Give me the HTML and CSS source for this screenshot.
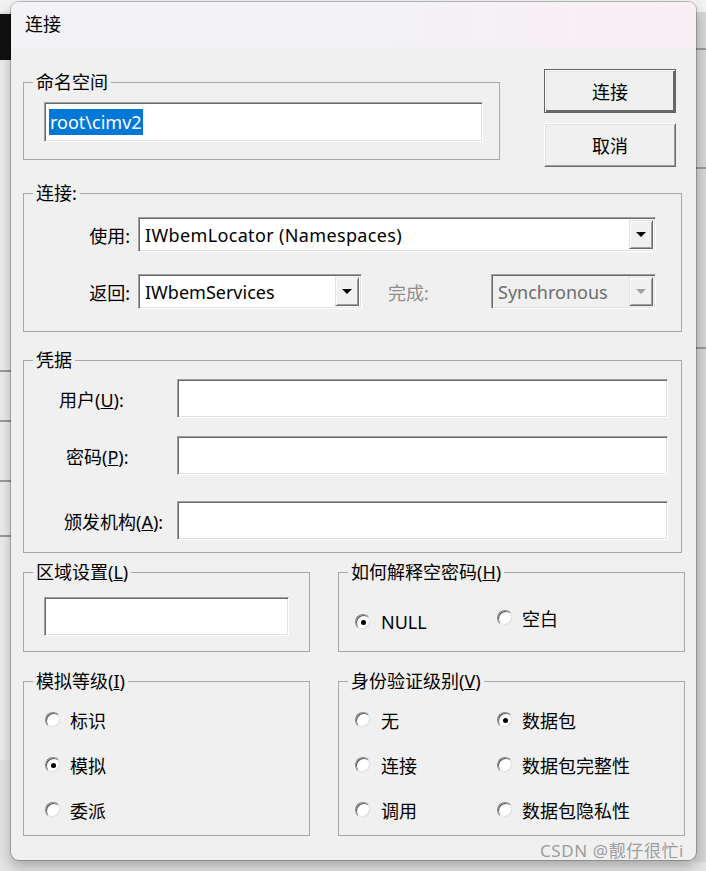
FILE: index.html
```html
<!DOCTYPE html>
<html lang="zh-CN">
<head>
<meta charset="utf-8">
<title>连接</title>
<link rel="stylesheet" href="styles.css">
</head>
<body>
<div class="desk">
  <div class="bg-top"></div>
  <div class="bg-dark"></div>
  <div class="bg-left"><span class="bg-line l1"></span><span class="bg-line l2"></span><span class="bg-line l3"></span><span class="bg-line l4"></span></div>
  <div class="bg-right"><span class="bg-line r1"></span><span class="bg-line r2"></span><span class="bg-line r3"></span></div>
</div>

<div class="dialog">
  <div class="titlebar">连接</div>
  <div class="body">

    <div class="row-top">
      <fieldset class="grp g-ns">
        <legend>命名空间</legend>
        <div class="edit e-ns"><span class="sel">root\cimv2</span></div>
      </fieldset>
      <div class="btns">
        <div class="btn default">连接</div>
        <div class="btn">取消</div>
      </div>
    </div>

    <fieldset class="grp g-conn">
      <legend>连接:</legend>
      <div class="crow r1">
        <span class="clbl">使用:</span>
        <div class="combo c-use"><span class="ctext">IWbemLocator (Namespaces)</span><span class="cbtn"><span class="tri"></span></span></div>
      </div>
      <div class="crow r2">
        <span class="clbl">返回:</span>
        <div class="combo c-ret"><span class="ctext">IWbemServices</span><span class="cbtn"><span class="tri"></span></span></div>
        <span class="dlbl">完成:</span>
        <div class="combo c-done disabled"><span class="ctext">Synchronous</span><span class="cbtn"><span class="tri"></span></span></div>
      </div>
    </fieldset>

    <fieldset class="grp g-cred">
      <legend>凭据</legend>
      <div class="frow f1"><span class="flbl p-u">用户(<u>U</u>):</span><div class="edit e-cred"></div></div>
      <div class="frow f2"><span class="flbl p-p">密码(<u>P</u>):</span><div class="edit e-cred"></div></div>
      <div class="frow f3"><span class="flbl p-a">颁发机构(<u>A</u>):</span><div class="edit e-cred"></div></div>
    </fieldset>

    <div class="row-pair r-mid">
      <fieldset class="grp g-small g-loc">
        <legend>区域设置(<u>L</u>)</legend>
        <div class="edit e-loc"></div>
      </fieldset>
      <fieldset class="grp g-wide g-null">
        <legend>如何解释空密码(<u>H</u>)</legend>
        <div class="nullrow">
          <label class="ritem ri-null"><span class="radio on"></span><span class="rtext">NULL</span></label>
          <label class="ritem ri-blank"><span class="radio"></span><span class="rtext">空白</span></label>
        </div>
      </fieldset>
    </div>

    <div class="row-pair r-bot">
      <fieldset class="grp g-small g-imp">
        <legend>模拟等级(<u>I</u>)</legend>
        <div class="rlist">
          <label class="ritem"><span class="radio"></span><span class="rtext">标识</span></label>
          <label class="ritem"><span class="radio on"></span><span class="rtext">模拟</span></label>
          <label class="ritem"><span class="radio"></span><span class="rtext">委派</span></label>
        </div>
      </fieldset>
      <fieldset class="grp g-wide g-auth">
        <legend>身份验证级别(<u>V</u>)</legend>
        <div class="rgrid">
          <label class="ritem"><span class="radio"></span><span class="rtext">无</span></label>
          <label class="ritem"><span class="radio on"></span><span class="rtext">数据包</span></label>
          <label class="ritem"><span class="radio"></span><span class="rtext">连接</span></label>
          <label class="ritem"><span class="radio"></span><span class="rtext">数据包完整性</span></label>
          <label class="ritem"><span class="radio"></span><span class="rtext">调用</span></label>
          <label class="ritem"><span class="radio"></span><span class="rtext">数据包隐私性</span></label>
        </div>
      </fieldset>
    </div>

  </div>
</div>

<div class="watermark">CSDN @靓仔很忙i</div>
</body>
</html>
```

FILE: styles.css
```css
* { box-sizing: border-box; }

html, body {
  margin: 0;
  padding: 0;
}

body {
  width: 706px;
  height: 871px;
  overflow: hidden;
  position: relative;
  background: #e4e4e4;
  font-family: "Noto Sans", "Noto Sans CJK SC", sans-serif;
  font-size: 18px;
  color: #000;
}

/* ---------- background desktop ---------- */
.desk {
  position: absolute;
  left: 0;
  top: 0;
  width: 706px;
  height: 871px;
}
.bg-top {
  position: absolute;
  left: 0; top: 0;
  width: 706px; height: 12px;
  background: #f2f2f2;
}
.bg-dark {
  position: absolute;
  left: 0; top: 14px;
  width: 12px; height: 46px;
  background: #111;
}
.bg-left {
  position: absolute;
  left: 0; top: 60px;
  width: 12px; height: 700px;
  background: #ececec;
}
.bg-right {
  position: absolute;
  left: 694px; top: 12px;
  width: 12px; height: 850px;
  background: #d6d6d6;
}
.bg-line {
  position: absolute;
  left: 0;
  width: 12px;
  height: 2px;
  background: #9a9a9a;
}
.l1 { top: 310px; }
.l2 { top: 360px; }
.l3 { top: 420px; }
.l4 { top: 475px; }
.r1 { top: 36px; }
.r2 { top: 155px; }
.r3 { top: 335px; }

/* ---------- dialog window ---------- */
.dialog {
  position: absolute;
  left: 11px;
  top: 2px;
  width: 685px;
  height: 858px;
  border-radius: 8px;
  overflow: hidden;
  background: #f0f0f0;
  box-shadow: 0 0 0 1px rgba(0, 0, 0, 0.22), 0 6px 14px rgba(0, 0, 0, 0.28);
}

.titlebar {
  height: 45px;
  padding-left: 14px;
  padding-bottom: 4px;
  display: flex;
  align-items: center;
  background: linear-gradient(90deg, #f2f2f7 0%, #f3f2f7 55%, #f9eef3 100%);
  font-size: 18px;
}

.body {
  padding: 22px 0 0 12px;
}

/* ---------- group boxes ---------- */
.grp {
  margin: 0;
  padding: 0;
  min-width: 0;
  border: 1px solid #a9a9a9;
  border-radius: 0;
}
.grp legend {
  margin-left: 9px;
  padding: 0 3px;
  font-size: 18px;
  line-height: 18px;
  height: 18px;
}

/* row 1 */
.row-top {
  display: flex;
  align-items: flex-start;
}
.g-ns {
  margin-top: 4px;
  width: 477px;
  height: 87px;
}
.btns {
  margin-left: 44px;
  display: flex;
  flex-direction: column;
  gap: 10px;
}
.btn {
  width: 132px;
  height: 44px;
  display: flex;
  align-items: center;
  justify-content: center;
  background: #f0f0f0;
  border: 1px solid;
  border-color: #fff #696969 #696969 #fff;
  box-shadow: inset 1px 1px 0 #e3e3e3, inset -1px -1px 0 #a0a0a0;
  font-size: 18px;
}
.btn.default {
  border: 1px solid #646464;
  box-shadow: inset 1px 1px 0 #fff, inset -2px -2px 0 #696969, inset 2px 2px 0 #e3e3e3;
}

/* edits */
.edit {
  background: #fff;
  border: 1px solid;
  border-color: #a0a0a0 #fff #fff #a0a0a0;
  box-shadow: inset 1px 1px 0 #696969, inset -1px -1px 0 #e3e3e3;
  display: flex;
  align-items: center;
}
.e-ns {
  margin: 11px 0 0 20px;
  width: 439px;
  height: 40px;
  padding-left: 4px;
}
.sel {
  background: #0078d7;
  color: #fff;
  line-height: 26px;
  padding: 0 1px;
}

/* connection group */
.g-conn {
  margin-top: 17px;
  width: 659px;
  height: 148px;
}
.crow {
  display: flex;
  align-items: center;
  height: 35px;
}
.crow.r1 { margin-top: 15px; }
.crow.r2 { margin-top: 22px; }
.clbl {
  width: 106px;
  text-align: right;
  margin-right: 8px;
}
.dlbl {
  margin-left: 26px;
  width: 103px;
  color: #8d8d8d;
}
.combo {
  height: 35px;
  display: flex;
  background: #fff;
  border: 1px solid;
  border-color: #a0a0a0 #fff #fff #a0a0a0;
  box-shadow: inset 1px 1px 0 #696969, inset -1px -1px 0 #e3e3e3;
  padding: 2px 2px 2px 2px;
}
.c-use { width: 518px; }
.c-use .ctext { letter-spacing: 0.35px; }
.c-ret { width: 224px; }
.c-done { width: 165px; }
.ctext {
  flex: 1;
  display: flex;
  align-items: center;
  padding-left: 4px;
  white-space: nowrap;
  overflow: hidden;
}
.cbtn {
  width: 24px;
  display: flex;
  align-items: center;
  justify-content: center;
  background: #f0f0f0;
  border: 1px solid;
  border-color: #e3e3e3 #696969 #696969 #e3e3e3;
  box-shadow: inset 1px 1px 0 #fff, inset -1px -1px 0 #a0a0a0;
}
.tri {
  width: 0;
  height: 0;
  border-left: 5px solid transparent;
  border-right: 5px solid transparent;
  border-top: 5px solid #000;
}
.combo.disabled { background: #f0f0f0; }
.combo.disabled .ctext { color: #6d6d6d; }
.combo.disabled .tri { border-top-color: #a0a0a0; }

/* credentials group */
.g-cred {
  margin-top: 19px;
  width: 659px;
  height: 202px;
}
.frow {
  display: flex;
  align-items: center;
  height: 39px;
}
.frow.f1 { margin-top: 10px; }
.frow.f2 { margin-top: 18px; }
.frow.f3 { margin-top: 26px; }
.flbl {
  width: 153px;
  white-space: nowrap;
}
.p-u { padding-left: 35px; }
.p-p { padding-left: 42px; }
.p-a { padding-left: 40px; }
.e-cred {
  width: 491px;
  height: 39px;
}

/* paired rows */
.row-pair {
  display: flex;
  align-items: flex-start;
}
.r-mid { margin-top: 10px; }
.r-bot { margin-top: 20px; }
.g-small { width: 287px; }
.g-wide { width: 347px; margin-left: 28px; }
.r-mid .grp { height: 89px; }
.r-bot .grp { height: 164px; }

.e-loc {
  margin: 16px 0 0 20px;
  width: 245px;
  height: 39px;
}

/* radios */
.ritem {
  display: flex;
  align-items: center;
  height: 30px;
  gap: 9px;
  white-space: nowrap;
}
.radio {
  position: relative;
  flex: none;
  width: 16px;
  height: 16px;
  border-radius: 50%;
  background: #fff;
  border: 1px solid;
  border-color: #8a8a8a #ececec #ececec #8a8a8a;
  box-shadow: inset 1px 1px 0 #5a5a5a, inset -1px -1px 0 #dcdcdc;
}
.radio.on::after {
  content: "";
  position: absolute;
  left: 5px;
  top: 5px;
  width: 5px;
  height: 5px;
  border-radius: 50%;
  background: #000;
}

.nullrow {
  display: flex;
  align-items: flex-start;
  padding-left: 16px;
}
.ri-null { width: 142px; margin-top: 26px; gap: 10px; }
.ri-blank { margin-top: 22px; }

.rlist {
  padding: 15px 0 0 21px;
  display: flex;
  flex-direction: column;
  gap: 15px;
}
.rgrid {
  padding: 15px 0 0 16px;
  display: grid;
  grid-template-columns: 142px 1fr;
  row-gap: 15px;
}
.rgrid .ritem:nth-child(odd) { gap: 10px; }

/* watermark */
.watermark {
  position: absolute;
  left: 540px;
  top: 840px;
  font-size: 17px;
  line-height: 22px;
  color: rgba(140, 140, 140, 0.85);
  letter-spacing: 0.6px;
  white-space: nowrap;
}
```
